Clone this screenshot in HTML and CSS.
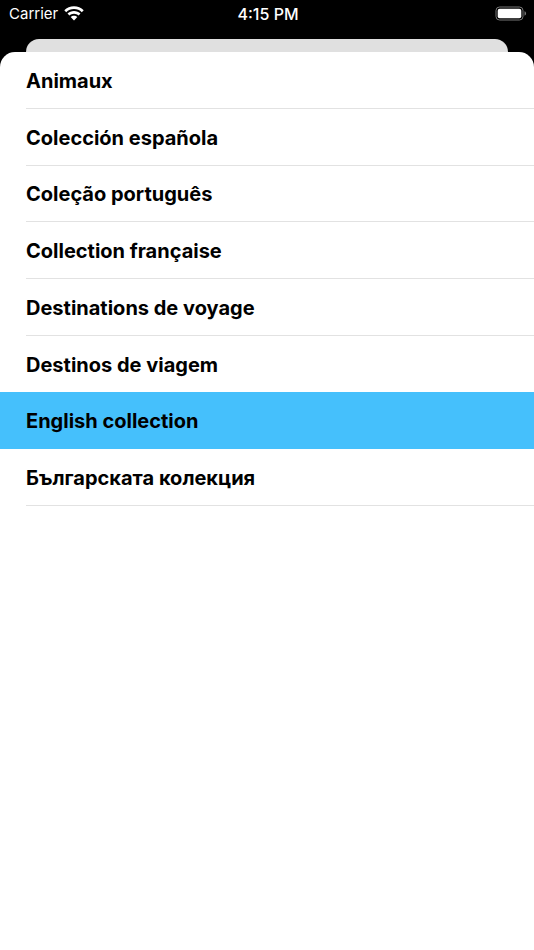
FILE: index.html
```
<!DOCTYPE html>
<html lang="en">
	<head>
		<meta charset="UTF-8">
		<meta name="viewport" content="width=device-width, initial-scale=1">
		<title>Collections</title>
		<link rel="stylesheet" href="styles.css">
	</head>
	<body>
		<header class="statusbar">
			<div class="carrier">
				<span>Carrier</span>
				<svg class="wifi" viewBox="0 0 20 15" aria-hidden="true">
					<path d="M10 .3C6.300 .3 2.800 1.700 .3 4.200L2.200 6.200C4.300 4.200 7 3.100 10 3.100S15.700 4.200 17.800 6.200L19.700 4.200C17.200 1.700 13.700 .3 10 .3Z"/>
					<path d="M10 5C7.500 5 5.200 6 3.500 7.600L5.400 9.500C6.700 8.400 8.300 7.700 10 7.700S13.300 8.400 14.600 9.500L16.500 7.600C14.800 6 12.500 5 10 5Z"/>
					<path d="M10 9.700C8.700 9.700 7.600 10.200 6.700 11L10 14.500L13.300 11C12.400 10.200 11.300 9.700 10 9.700Z"/>
				</svg>
			</div>
			<time class="clock">4:15 PM</time>
			<svg class="battery" viewBox="0 0 32 16" aria-hidden="true">
				<rect class="shell" x="1" y="1" width="27" height="13" rx="3.500"/>
				<rect class="level" x="2.700" y="2.700" width="23.600" height="9.600" rx="2"/>
				<path class="tip" d="M29.500 5.300C31.600 6 31.600 9 29.500 9.700Z"/>
			</svg>
		</header>
		<div class="backsheet"></div>
		<main class="sheet">
			<ul class="list">
				<li class="item"><button type="button" class="row">Animaux</button></li>
				<li class="item"><button type="button" class="row">Colección española</button></li>
				<li class="item"><button type="button" class="row">Coleção português</button></li>
				<li class="item"><button type="button" class="row">Collection française</button></li>
				<li class="item"><button type="button" class="row">Destinations de voyage</button></li>
				<li class="item"><button type="button" class="row">Destinos de viagem</button></li>
				<li class="item selected"><button type="button" class="row" aria-pressed="true">English collection</button></li>
				<li class="item"><button type="button" class="row">Българската колекция</button></li>
			</ul>
		</main>
	</body>
</html>
```

FILE: styles.css
```
*{
	box-sizing: border-box;
}
body{
	margin: 0;
	min-height: 100vh;
	display: flex;
	flex-direction: column;
	background: #000;
	color: #000;
	font-family: Inter, "Liberation Sans", sans-serif;
}
.statusbar{
	display: grid;
	grid-template-columns: 1fr auto 1fr;
	align-items: center;
	padding: 4px 7px 15px 9px;
	line-height: 20px;
	color: #fff;
	font-size: 15px;
}
.carrier{
	display: flex;
	align-items: center;
	gap: 6px;
}
.wifi{
	width: 20px;
	height: 15px;
	margin-bottom: 2px;
	fill: #fff;
}
.clock{
	font-size: 16px;
	font-weight: 500;
}
.battery{
	width: 32px;
	height: 16px;
	justify-self: end;
}
.battery .shell{
	fill: none;
	stroke: #777;
}
.battery .level{
	fill: #fff;
}
.battery .tip{
	fill: #777;
}
/* edge of the screen lying under the sheet */
.backsheet{
	height: 13px;
	margin: 0 26px;
	border-radius: 13px 13px 0 0;
	background: #e0e0e0;
}
.sheet{
	flex: 1;
	overflow: hidden;
	border-radius: 15px 15px 0 0;
	background: #fff;
}
.list{
	display: grid;
	grid-auto-rows: 1fr;
	min-height: 454px;
	margin: 0;
	padding: 0;
	list-style: none;
}
.item{
	display: flex;
	padding-left: 26px;
}
.row{
	flex: 1;
	padding: 2px 0 0;
	border: 0;
	border-bottom: 1px solid #e2e2e2;
	background: none;
	color: inherit;
	font: 700 20px/28px Inter, "Liberation Sans", sans-serif;
	text-align: left;
	cursor: pointer;
}
/* covers the divider of the row above */
.selected{
	margin-top: -1px;
	background: #45c0fc;
}
.selected .row{
	border-color: transparent;
}
```
